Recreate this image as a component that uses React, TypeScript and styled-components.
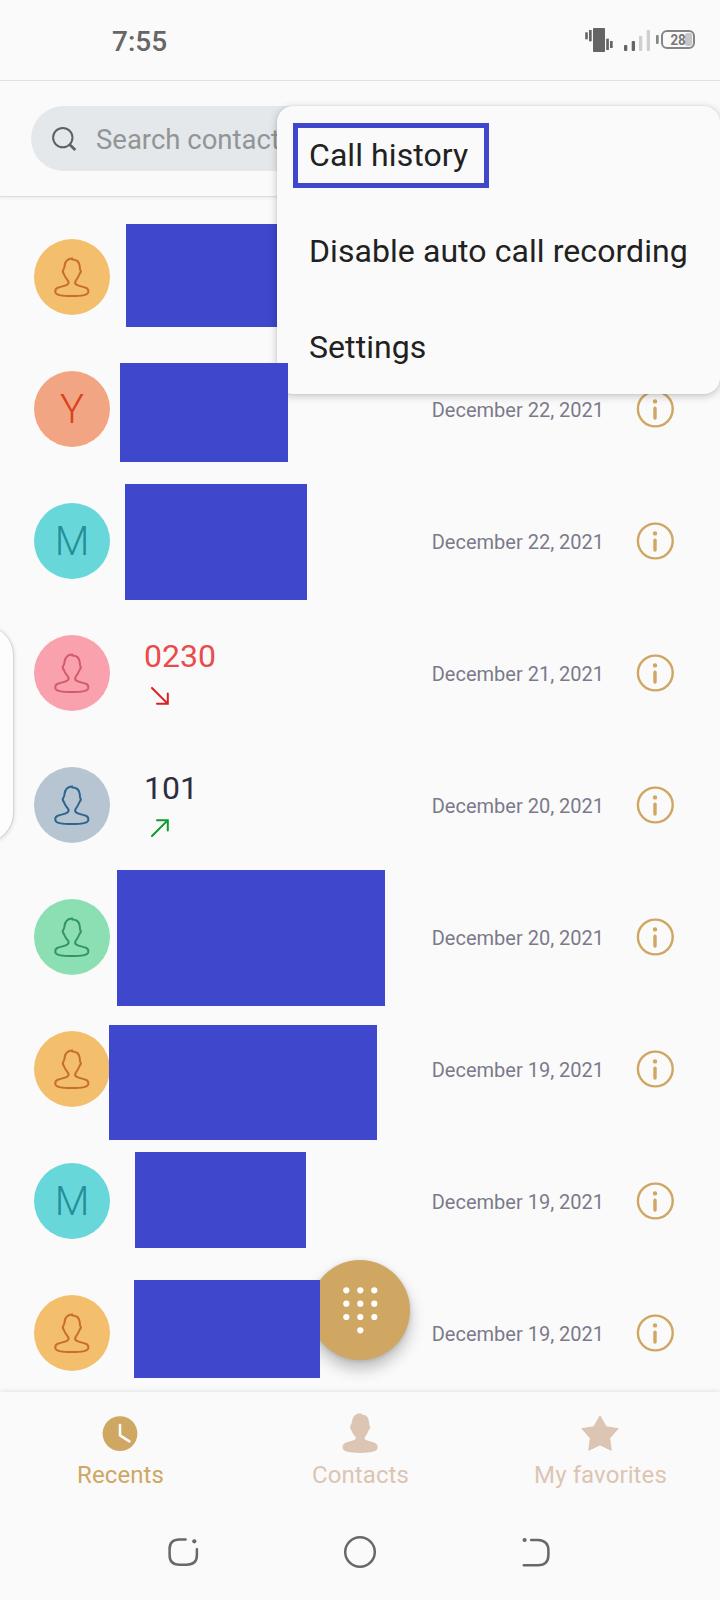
import React from "react";
import styled, { createGlobalStyle } from "styled-components";

const GlobalStyle = createGlobalStyle`
  *, *::before, *::after { box-sizing: border-box; }
  body { margin: 0; background: #fafafa; }
  button { border: 0; background: none; padding: 0; font: inherit; color: inherit; }
  svg { display: block; }
`;

const GOLD = "#cfa762";
const MASK = "#3f47cc";

const Screen = styled.div`
  position: relative;
  display: flex;
  flex-direction: column;
  width: 720px;
  height: 1600px;
  overflow: hidden;
  background: #fafafa;
  font-family: Roboto, "Noto Sans", sans-serif;
`;

const StatusBar = styled.header`
  display: flex;
  justify-content: space-between;
  flex: none;
  height: 81px;
  padding: 0 22px 0 112px;
  border-bottom: 1px solid #e4e4e4;
`;

const Clock = styled.span`
  padding-top: 25px;
  color: #666;
  font-size: 28px;
  font-weight: 500;
  line-height: 33px;
`;

const SearchHeader = styled.div`
  flex: none;
  height: 116px;
  padding: 25px 31px 0;
  border-bottom: 1px solid #dedede;
  box-shadow: 0 1px 3px rgba(0, 0, 0, 0.07);
`;

const SearchField = styled.div`
  display: flex;
  align-items: center;
  gap: 19px;
  height: 65px;
  padding: 0 20px;
  border-radius: 33px;
  background: #e4e8eb;
  color: #929596;
  font-size: 27.5px;
  line-height: 32px;

  span { padding-top: 3px; }
`;

const List = styled.ul`
  flex: 1;
  min-height: 0;
  margin: 0;
  padding: 14px 0 0;
  overflow: hidden;
  list-style: none;
`;

const Row = styled.li`
  position: relative;
  display: flex;
  align-items: center;
  height: 132px;
  padding: 0 46px 0 34px;
`;

const Avatar = styled.div<{ $bg: string; $fg: string }>`
  display: flex;
  align-items: center;
  justify-content: center;
  flex: none;
  width: 76px;
  height: 76px;
  border-radius: 50%;
  background: ${(p) => p.$bg};
  color: ${(p) => p.$fg};
  font-size: 40px;
  font-weight: 300;
  line-height: 48px;
`;

const Initial = styled.span`
  padding-top: 2px;
`;

const Caller = styled.div`
  display: flex;
  flex-direction: column;
  flex: 1;
  align-self: flex-start;
  gap: 12px;
  padding: 30px 0 0 34px;
`;

const Number = styled.span<{ $missed?: boolean }>`
  color: ${(p) => (p.$missed ? "#ea4c4c" : "#2e2c3e")};
  font-size: 32px;
  line-height: 38px;
`;

const CallArrow = styled.span`
  padding-left: 7px;
`;

const DateText = styled.time`
  margin-right: 32px;
  padding-top: 1px;
  color: #7a7a8b;
  font-size: 20px;
  line-height: 24px;
`;

const Mask = styled.div<{ $x: number; $y: number; $w: number; $h: number; $under?: boolean }>`
  position: absolute;
  z-index: ${(p) => (p.$under ? 1 : 3)};
  left: ${(p) => p.$x}px;
  top: ${(p) => p.$y}px;
  width: ${(p) => p.$w}px;
  height: ${(p) => p.$h}px;
  background: ${MASK};
`;

const Menu = styled.div`
  position: absolute;
  z-index: 2;
  top: 106px;
  right: 0;
  width: 443px;
  height: 288px;
  border-radius: 16px;
  background: #fafafa;
  box-shadow: 0 2px 8px rgba(0, 0, 0, 0.22), 0 0 2px rgba(0, 0, 0, 0.1);
`;

const MenuItem = styled.div`
  display: flex;
  align-items: center;
  height: 96px;
  padding-left: 16px;
  color: #212121;
  font-size: 32px;
  line-height: 38px;
  letter-spacing: 0.07px;
  white-space: nowrap;
`;

const MenuLabel = styled.span<{ $marked?: boolean }>`
  width: ${(p) => (p.$marked ? "196px" : "auto")};
  height: 65px;
  margin-top: 3px;
  padding: 8px 11px;
  border: 5px solid ${(p) => (p.$marked ? MASK : "transparent")};
`;

const SideHandle = styled.div`
  position: absolute;
  left: -46px;
  top: 625px;
  width: 60px;
  height: 218px;
  border: 1px solid #d4d4d4;
  border-radius: 30px;
  background: #fdfdfd;
  box-shadow: 0 1px 4px rgba(0, 0, 0, 0.14);
`;

const DialButton = styled.button`
  position: absolute;
  z-index: 2;
  left: 310px;
  top: 1260px;
  width: 100px;
  height: 100px;
  border-radius: 50%;
  background: ${GOLD};
  box-shadow: 0 9px 15px rgba(0, 0, 0, 0.24), 0 1px 4px rgba(0, 0, 0, 0.14);
`;

const Tabs = styled.nav`
  position: relative;
  display: grid;
  grid-template-columns: repeat(3, 1fr);
  flex: none;
  height: 112px;
  background: #fafafa;
  box-shadow: 0 -1px 5px rgba(0, 0, 0, 0.09);
  clip-path: inset(-8px 0 0 0);
`;

const Tab = styled.button<{ $active?: boolean }>`
  display: flex;
  flex-direction: column;
  align-items: center;
  padding-top: 20px;
  color: ${(p) => (p.$active ? GOLD : "#dcc5b3")};
  font-size: 24px;
  line-height: 28px;
  letter-spacing: 0.1px;

  svg { margin-bottom: 6px; }
  span { padding-left: 1px; }
`;

const SystemNav = styled.nav`
  display: flex;
  justify-content: center;
  align-items: center;
  gap: 144px;
  flex: none;
  height: 96px;
`;

const PERSON =
  "M38.3 19.4C34 19.3 30.8 22.5 30.5 27.2C30.5 29 30.2 29.6 29.3 30.8C28.4 32 28.9 33.8 29.9 35C30.8 38 32.6 39.8 34.2 42C34.9 43.2 34.6 44.6 33.2 45.6C30.4 47.4 26 47.6 23.2 49C21 50 21.1 52 21.4 53.5C22 55.5 27 57.1 37.8 57.1C48.6 57.1 53.6 55.5 54.2 53.5C54.5 52 54.6 50 52.4 49C49.6 47.6 45.2 47.4 42.4 45.6C40.9 44.6 40.9 43.2 41.6 42C43.4 39.6 44.4 37.8 45.5 35C46.7 33.9 47.1 32 46.2 30.9C45.8 29.5 45.9 27.5 45.5 26C44.8 22.4 42.6 20.5 38.3 20.5Z";

const PersonOutline = () => (
  <svg width="76" height="76" viewBox="0 0 76 76" fill="none" stroke="currentColor" strokeWidth="2" strokeLinejoin="round">
    <path d={PERSON} />
  </svg>
);

const SearchIcon = () => (
  <svg width="26" height="26" viewBox="0 0 26 26" fill="none" stroke="#606060">
    <circle cx="11.8" cy="11.6" r="9.7" strokeWidth="2" />
    <path d="M18.6 18.6L24.3 24" strokeWidth="2.8" />
  </svg>
);

const StatusIcons = () => (
  <svg width="114" height="80" viewBox="584 0 114 80" fill="#656565">
    <rect x="593" y="28" width="12" height="24" rx="0.8" />
    <rect x="589" y="30" width="2.7" height="11.3" />
    <rect x="585.2" y="32.3" width="2.6" height="7" />
    <rect x="606.2" y="38.7" width="2.7" height="11.3" />
    <rect x="610" y="41" width="2.7" height="7" />
    <rect x="624" y="45" width="3.3" height="6" rx="1" />
    <rect x="631.7" y="41" width="3.3" height="10" rx="1" />
    <rect x="639" y="35.7" width="3.3" height="15.3" rx="1" fill="#cfcfcf" />
    <rect x="646.7" y="30" width="3.3" height="21" rx="1" fill="#cfcfcf" />
    <rect x="656" y="35" width="2.7" height="9" rx="1" fill="#858585" />
    <rect x="685" y="33" width="7.2" height="13" rx="2.5" fill="#c6c6c6" />
    <rect x="662" y="31" width="32" height="17" rx="5" fill="none" stroke="#858585" strokeWidth="2" />
    <text x="670.4" y="45.1" fontSize="15.5" fontWeight="700" fill="#787878" textLength="15.4" lengthAdjust="spacingAndGlyphs">28</text>
  </svg>
);

const InfoIcon = () => (
  <svg width="38" height="38" viewBox="0 0 38 38" fill="none" stroke={GOLD}>
    <circle cx="19.3" cy="19" r="17.4" strokeWidth="2.4" />
    <circle cx="19" cy="11.4" r="2.2" fill={GOLD} stroke="none" />
    <path d="M19 18.3V28" strokeWidth="3.4" strokeLinecap="round" />
  </svg>
);

const MissedArrow = () => (
  <svg width="18" height="18" viewBox="0 0 18 18" fill="none" stroke="#dc1f1f" strokeWidth="2" strokeLinecap="round">
    <path d="M1 1L16.4 16.4M6 16.8H16.8V6.5" />
  </svg>
);

const OutgoingArrow = () => (
  <svg width="18" height="18" viewBox="0 0 18 18" fill="none" stroke="#0a9b2c" strokeWidth="2" strokeLinecap="round">
    <path d="M1 17L16.4 1.6M6 1.2H16.8V11.5" />
  </svg>
);

const KeypadDots = () => (
  <svg width="100" height="100" viewBox="0 0 100 100" fill="#fff">
    {[30.3, 43.7, 57].map((y) => [36.3, 50.3, 64.3].map((x) => <circle key={`${x}-${y}`} cx={x} cy={y} r="3.1" />))}
    <circle cx="50.3" cy="70.3" r="3.1" />
  </svg>
);

const RecentsIcon = () => (
  <svg width="40" height="43" viewBox="0 0 40 43">
    <circle cx="20" cy="21.6" r="17.4" fill="currentColor" />
    <path d="M20 13V23.3L29.4 29.4" fill="none" stroke="#fafafa" strokeWidth="2.6" strokeLinecap="round" strokeLinejoin="round" />
  </svg>
);

const ContactsIcon = () => (
  <svg width="40" height="43" viewBox="17.7 17.2 40 43" fill="currentColor" stroke="currentColor" strokeWidth="2" strokeLinejoin="round">
    <path d={PERSON} />
  </svg>
);

const StarIcon = () => (
  <svg width="40" height="43" viewBox="0 0 40 43" fill="currentColor" stroke="currentColor" strokeWidth="1" strokeLinejoin="round">
    <path d="M20 3.8L26.1 14.7L38.2 16.7L29.6 26.2L31.3 38.3L20 32.9L8.7 38.3L10.4 26.2L1.8 16.7L13.9 14.7Z" />
  </svg>
);

const navStroke = { fill: "none", stroke: "#686868", strokeWidth: 2.5, strokeLinecap: "round" as const };

const OverviewIcon = () => (
  <svg width="32" height="34" viewBox="0 0 32 34" {...navStroke}>
    <path d="M18.6 4.4H12.5Q2.6 4.4 2.6 14V20Q2.6 29.7 12.5 29.7H19.5Q29.9 29.7 29.9 20V14.2" />
    <circle cx="27.3" cy="6.3" r="2.1" fill="#686868" stroke="none" />
  </svg>
);

const HomeIcon = () => (
  <svg width="34" height="34" viewBox="0 0 34 34" {...navStroke}>
    <circle cx="17" cy="17" r="14.8" />
  </svg>
);

const BackIcon = () => (
  <svg width="32" height="34" viewBox="0 0 32 34" {...navStroke}>
    <path d="M10.2 5H17Q27.4 5.5 27.4 15.5V20Q27.4 30 17 30.3H2.8" />
    <circle cx="3.6" cy="5" r="2.1" fill="#686868" stroke="none" />
  </svg>
);

type Palette = [background: string, foreground: string];
const amber: Palette = ["#f3bf6c", "#c66e2a"];
const coral: Palette = ["#f1a583", "#dc4020"];
const teal: Palette = ["#67d7d9", "#258e99"];
const pink: Palette = ["#f9a1ad", "#d25b6c"];
const slate: Palette = ["#b6c5d1", "#2d658e"];
const green: Palette = ["#8cdfb3", "#349561"];

type Call = {
  palette: Palette;
  initial?: string;
  number?: string;
  missed?: boolean;
  date?: string;
  mask?: [x: number, y: number, w: number, h: number];
};

const calls: Call[] = [
  { palette: amber, mask: [126, 13, 151, 103] },
  { palette: coral, initial: "Y", date: "December 22, 2021", mask: [120, 20, 168, 99] },
  { palette: teal, initial: "M", date: "December 22, 2021", mask: [125, 9, 182, 116] },
  { palette: pink, number: "0230", missed: true, date: "December 21, 2021" },
  { palette: slate, number: "101", date: "December 20, 2021" },
  { palette: green, date: "December 20, 2021", mask: [117, -1, 268, 136] },
  { palette: amber, date: "December 19, 2021", mask: [109, 22, 268, 115] },
  { palette: teal, initial: "M", date: "December 19, 2021", mask: [135, 17, 171, 96] },
  { palette: amber, date: "December 19, 2021", mask: [134, 13, 186, 98] },
];

export default function App() {
  return (
    <Screen>
      <GlobalStyle />
      <StatusBar>
        <Clock>7:55</Clock>
        <StatusIcons />
      </StatusBar>
      <SearchHeader>
        <SearchField>
          <SearchIcon />
          <span>Search contacts</span>
        </SearchField>
      </SearchHeader>
      <List>
        {calls.map((call, index) => (
          <Row key={index}>
            <Avatar $bg={call.palette[0]} $fg={call.palette[1]}>
              {call.initial ? <Initial>{call.initial}</Initial> : <PersonOutline />}
            </Avatar>
            <Caller>
              {call.number && (
                <>
                  <Number $missed={call.missed}>{call.number}</Number>
                  <CallArrow>{call.missed ? <MissedArrow /> : <OutgoingArrow />}</CallArrow>
                </>
              )}
            </Caller>
            {call.date && (
              <>
                <DateText>{call.date}</DateText>
                <InfoIcon />
              </>
            )}
            {call.mask && (
              <Mask $x={call.mask[0]} $y={call.mask[1]} $w={call.mask[2]} $h={call.mask[3]} $under={index === 0} />
            )}
          </Row>
        ))}
      </List>
      <Tabs>
        <Tab $active>
          <RecentsIcon />
          <span>Recents</span>
        </Tab>
        <Tab>
          <ContactsIcon />
          <span>Contacts</span>
        </Tab>
        <Tab>
          <StarIcon />
          <span>My favorites</span>
        </Tab>
      </Tabs>
      <SystemNav>
        <OverviewIcon />
        <HomeIcon />
        <BackIcon />
      </SystemNav>
      <SideHandle />
      <DialButton aria-label="Dial pad">
        <KeypadDots />
      </DialButton>
      <Menu>
        <MenuItem>
          <MenuLabel $marked>Call history</MenuLabel>
        </MenuItem>
        <MenuItem>
          <MenuLabel>Disable auto call recording</MenuLabel>
        </MenuItem>
        <MenuItem>
          <MenuLabel>Settings</MenuLabel>
        </MenuItem>
      </Menu>
    </Screen>
  );
}
